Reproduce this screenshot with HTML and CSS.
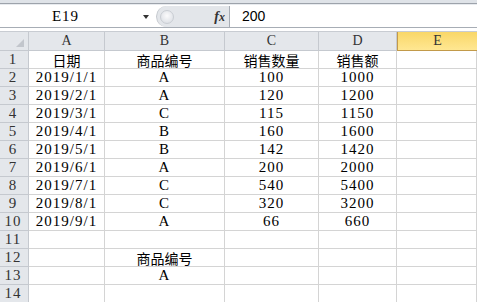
FILE: index.html
```html
<!DOCTYPE html>
<html lang="zh-CN">

<head>
    <meta charset="UTF-8">
    <title>销售数据</title>
    <link rel="stylesheet" href="styles.css">
</head>

<body>
    <div class="topbar"></div>
    <div class="formula-bar">
        <div class="name-box">
            <span class="cell-ref">E19</span>
            <span class="arrow"></span>
        </div>
        <div class="fx-area">
            <span class="knob"></span>
            <span class="fx"><i>f</i>x</span>
        </div>
        <div class="formula-input">200</div>
    </div>

    <div class="sheet">
        <div class="corner"><span class="tri"></span></div>
        <div class="col-head">A</div>
        <div class="col-head">B</div>
        <div class="col-head">C</div>
        <div class="col-head">D</div>
        <div class="col-head active">E</div>

        <div class="row-head">1</div>
        <div class="cell zh">日期</div>
        <div class="cell zh">商品编号</div>
        <div class="cell zh">销售数量</div>
        <div class="cell zh">销售额</div>
        <div class="cell"></div>

        <div class="row-head">2</div>
        <div class="cell">2019/1/1</div><div class="cell">A</div><div class="cell">100</div><div class="cell">1000</div><div class="cell"></div>
        <div class="row-head">3</div>
        <div class="cell">2019/2/1</div><div class="cell">A</div><div class="cell">120</div><div class="cell">1200</div><div class="cell"></div>
        <div class="row-head">4</div>
        <div class="cell">2019/3/1</div><div class="cell">C</div><div class="cell">115</div><div class="cell">1150</div><div class="cell"></div>
        <div class="row-head">5</div>
        <div class="cell">2019/4/1</div><div class="cell">B</div><div class="cell">160</div><div class="cell">1600</div><div class="cell"></div>
        <div class="row-head">6</div>
        <div class="cell">2019/5/1</div><div class="cell">B</div><div class="cell">142</div><div class="cell">1420</div><div class="cell"></div>
        <div class="row-head">7</div>
        <div class="cell">2019/6/1</div><div class="cell">A</div><div class="cell">200</div><div class="cell">2000</div><div class="cell"></div>
        <div class="row-head">8</div>
        <div class="cell">2019/7/1</div><div class="cell">C</div><div class="cell">540</div><div class="cell">5400</div><div class="cell"></div>
        <div class="row-head">9</div>
        <div class="cell">2019/8/1</div><div class="cell">C</div><div class="cell">320</div><div class="cell">3200</div><div class="cell"></div>
        <div class="row-head">10</div>
        <div class="cell">2019/9/1</div><div class="cell">A</div><div class="cell">66</div><div class="cell">660</div><div class="cell"></div>
        <div class="row-head">11</div>
        <div class="cell"></div><div class="cell"></div><div class="cell"></div><div class="cell"></div><div class="cell"></div>
        <div class="row-head">12</div>
        <div class="cell"></div><div class="cell zh">商品编号</div><div class="cell"></div><div class="cell"></div><div class="cell"></div>
        <div class="row-head">13</div>
        <div class="cell"></div><div class="cell">A</div><div class="cell"></div><div class="cell"></div><div class="cell"></div>
        <div class="row-head">14</div>
        <div class="cell"></div><div class="cell"></div><div class="cell"></div><div class="cell"></div><div class="cell"></div>
    </div>
</body>

</html>
```

FILE: styles.css
```css
body {
    margin: 0;
    background-color: #fff;
    font-family: "Liberation Serif", "Noto Sans CJK SC", serif;
    font-size: 15px;
    color: #000;
    overflow: hidden;
}

.topbar {
    height: 3px;
    background-color: #dfe3e8;
    border-bottom: 1px solid #9da3ab;
}

.formula-bar {
    display: flex;
    height: 21px;
    padding-top: 1px;
    background-color: #fff;
    border-top: 1px solid #e8ebef;
    border-bottom: 1px solid #a7adb5;
}

.name-box {
    display: flex;
    align-items: center;
    width: 156px;
}

.cell-ref {
    flex: 1;
    text-align: center;
    padding-right: 12px;
    letter-spacing: 1px;
}

.arrow {
    width: 0;
    height: 0;
    border-left: 3px solid transparent;
    border-right: 3px solid transparent;
    border-top: 4px solid #333;
    margin-right: 7px;
}

.fx-area {
    display: flex;
    align-items: center;
    justify-content: space-between;
    width: 74px;
    background-color: #e3e6ea;
    border-radius: 11px 0 0 11px;
    border-left: 1px solid #c4c8ce;
    border-right: 1px solid #a7adb5;
    box-sizing: border-box;
    padding: 0 4px 0 3px;
}

.knob {
    width: 12px;
    height: 12px;
    border-radius: 50%;
    background: radial-gradient(circle at 50% 40%, #fbfbfc, #d6dae0);
    border: 1px solid #c9cdd3;
}

.fx {
    font-style: italic;
    font-weight: bold;
    font-size: 12px;
    color: #333;
}

.fx i {
    font-size: 14px;
}

.formula-input {
    flex: 1;
    padding-left: 12px;
    line-height: 21px;
    font-family: "Liberation Sans", sans-serif;
    font-size: 14px;
}

.sheet {
    display: grid;
    grid-template-columns: 29px 76px 120px 94px 78px 1fr;
    grid-template-rows: 19px repeat(14, 18px);
    margin-top: 3px;
    border-top: 1px solid #c8ccd2;
    background-color: #fff;
}

.corner {
    background-color: #e4e7eb;
    border-right: 1px solid #c5c9cf;
    border-bottom: 1px solid #c5c9cf;
    position: relative;
}

.tri {
    position: absolute;
    right: 4px;
    bottom: 3px;
    width: 0;
    height: 0;
    border-left: 8px solid transparent;
    border-bottom: 8px solid #c2c6cc;
}

.col-head {
    display: flex;
    align-items: center;
    justify-content: center;
    background-color: #e4e7eb;
    border-right: 1px solid #c5c9cf;
    border-bottom: 1px solid #c5c9cf;
    color: #333;
    font-size: 14px;
}

.col-head.active {
    background: linear-gradient(#f9d768, #ffe792);
    border-left: 1px solid #c29a4a;
    border-bottom: 1px solid #c29a4a;
    border-right: none;
}

.row-head {
    display: flex;
    align-items: center;
    justify-content: center;
    background-color: #e4e7eb;
    border-right: 1px solid #c5c9cf;
    border-bottom: 1px solid #c5c9cf;
    color: #333;
    padding-right: 2px;
    letter-spacing: 1px;
}

.cell {
    display: flex;
    align-items: center;
    justify-content: center;
    border-right: 1px solid #d4d4d4;
    border-bottom: 1px solid #d4d4d4;
    white-space: nowrap;
    letter-spacing: 1px;
}

.cell.zh {
    font-family: "Noto Sans CJK SC", sans-serif;
    font-size: 14px;
    letter-spacing: 0;
}
```
